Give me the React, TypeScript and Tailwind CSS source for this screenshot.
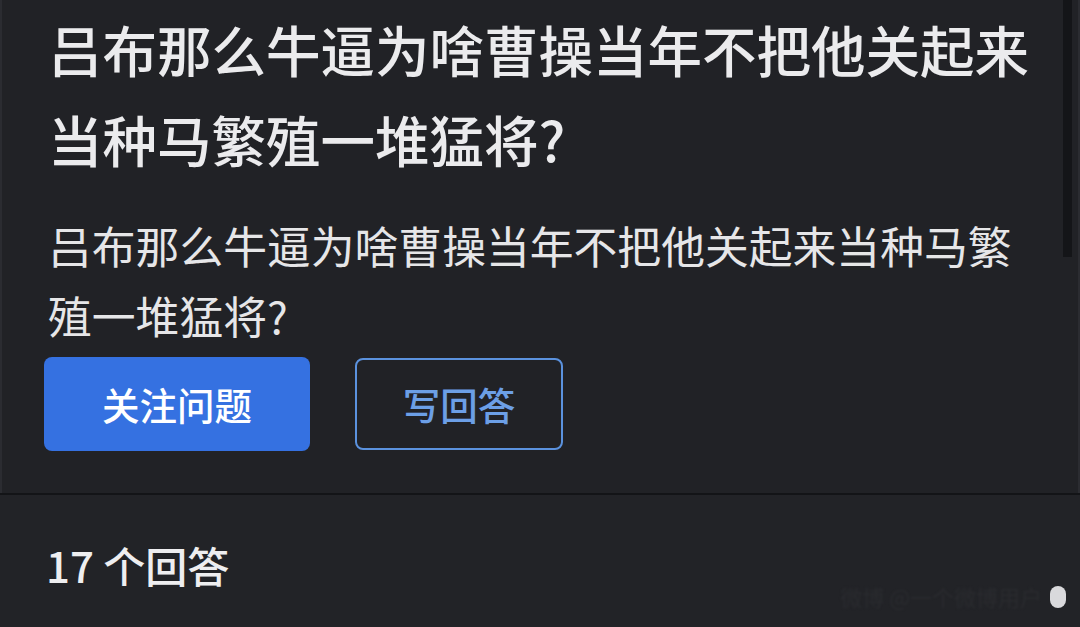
import React from 'react';

const FONT = { fontFamily: '"Noto Sans CJK SC", "Noto Sans", sans-serif' };

export default function App() {
  const title = '吕布那么牛逼为啥曹操当年不把他关起来当种马繁殖一堆猛将?';

  return (
    <div className="w-[1080px] h-[627px] overflow-hidden bg-[#212226] text-[#ebebed]" style={FONT}>
      {/* question card */}
      <div className="relative h-[493px] border-l-2 border-r-2 border-[#2b2c31] bg-[#212226]">
        <div className="pl-[46px] pt-[4px]">
          <h1 className="w-[990px] text-[54.5px] leading-[90px] font-medium">{title}</h1>
          <p className="w-[990px] mt-[26px] text-[43.8px] leading-[70px] text-[#e6e6e8]">{title}</p>
          <div className="flex items-center gap-[45px] mt-[7px] -ml-[4px]">
            <button className="w-[266px] h-[94px] rounded-[8px] bg-[#3571e1] text-white text-[37.5px] font-medium">
              关注问题
            </button>
            <button className="w-[208px] h-[92px] rounded-[8px] border-2 border-[#5b92de] text-[#6c9fe6] text-[37.5px] font-medium">
              写回答
            </button>
          </div>
        </div>
        {/* scrollbar thumb */}
        <div className="absolute right-[6px] top-0 w-[9px] h-[257px] bg-[#141518]" />
      </div>

      <div className="h-[2px] bg-[#131417]" />

      {/* answers count */}
      <div className="relative bg-[#222327] h-[132px] pl-[46px] pt-[45px]">
        <div className="text-[42px] leading-[50px] font-medium text-[#eeeef0]">17 个回答</div>
        <div className="absolute right-[14px] bottom-[14px] flex items-center gap-2">
          <span className="text-[22px] text-[#2a2b2f] blur-[1px]">微博 @一个微博用户</span>
          <span className="w-[16px] h-[22px] rounded-full bg-[#d9d9dc] blur-[0.5px]" />
        </div>
      </div>
    </div>
  );
}
